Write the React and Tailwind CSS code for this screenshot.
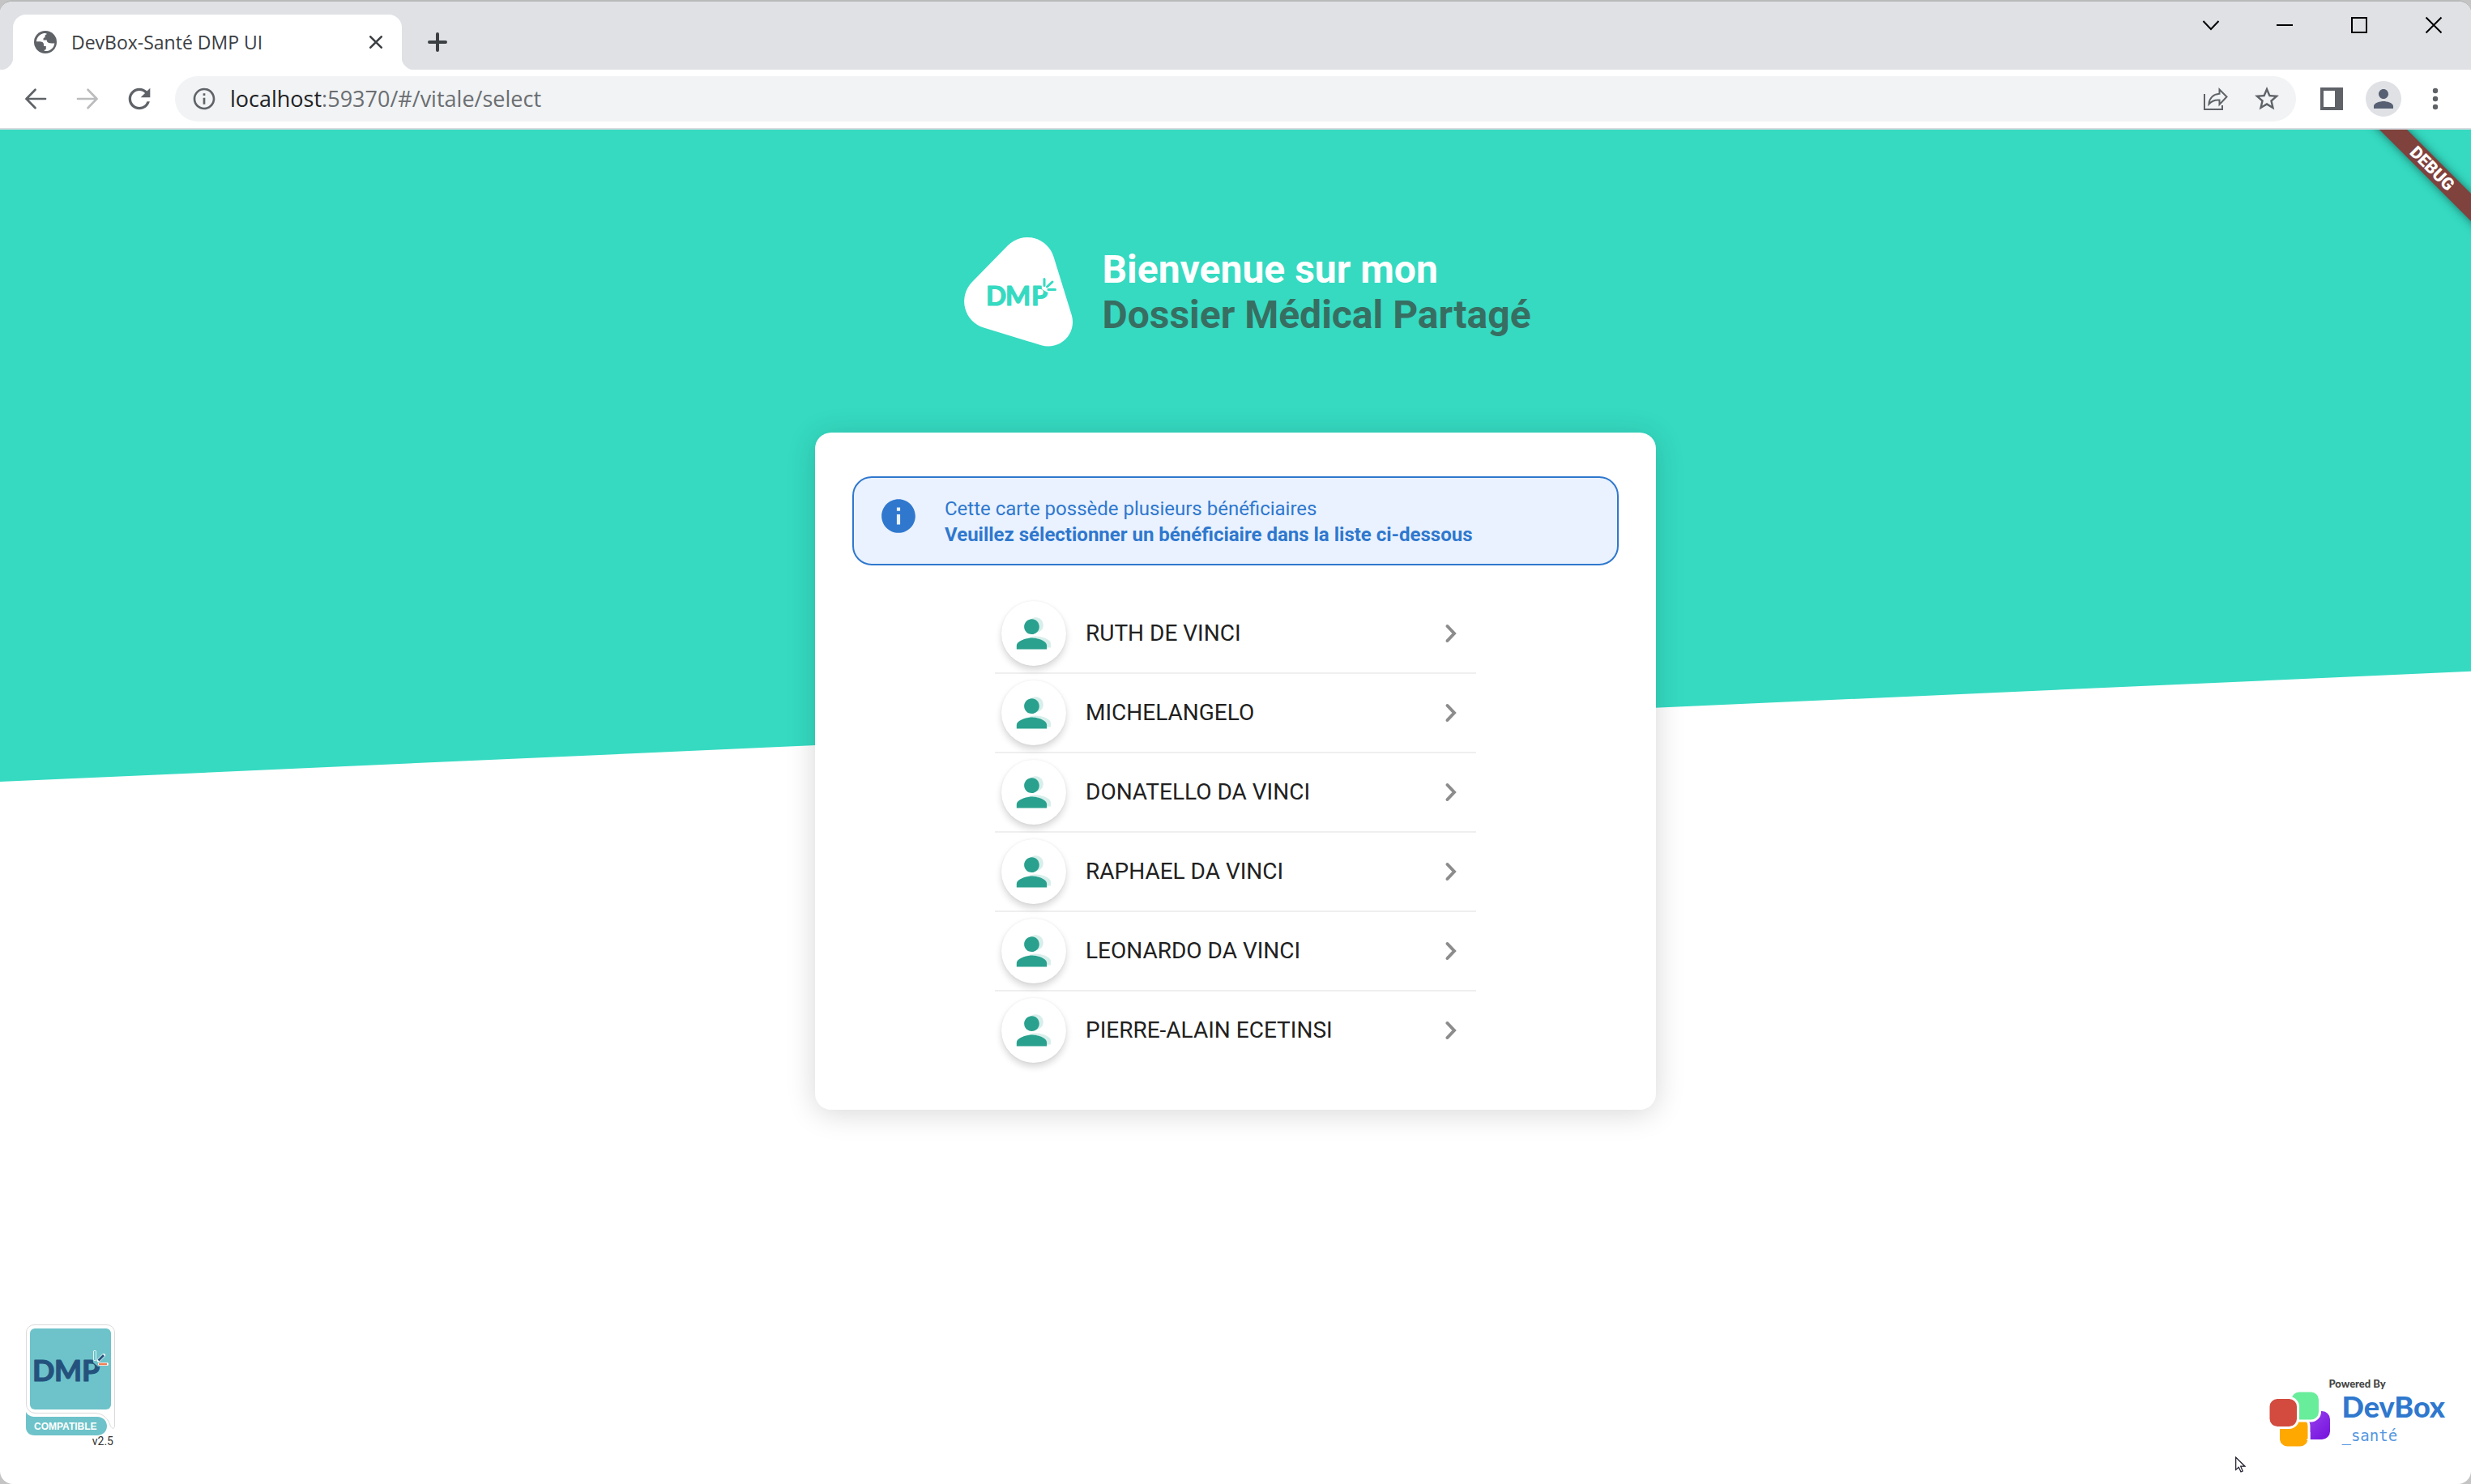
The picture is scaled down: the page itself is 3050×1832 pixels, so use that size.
import React from "react";
import { MdPerson, MdRefresh, MdStarBorder, MdInfo, MdInfoOutline } from "react-icons/md";

const beneficiaries = [
  "RUTH DE VINCI",
  "MICHELANGELO",
  "DONATELLO DA VINCI",
  "RAPHAEL DA VINCI",
  "LEONARDO DA VINCI",
  "PIERRE-ALAIN ECETINSI",
];

const PERSON = "M12 12c2.21 0 4-1.79 4-4s-1.79-4-4-4-4 1.79-4 4 1.79 4 4 4zm0 2c-2.67 0-8 1.34-8 4v2h16v-2c0-2.66-5.33-4-8-4z";

function Globe() {
  return (
    <svg className="size-7 shrink-0" viewBox="0 0 28 28" aria-hidden="true">
      <circle cx="14" cy="14" r="14" fill="#5f6368" />
      <path
        d="M12.5 2.9C7.200 3.600 3.200 8.100 2.900 13.300H6.500C9.500 13.300 12 14.300 12 17v2H14.800v3c0 1-.8 1.700-2 1.700V25c6.400.8 12-3.600 12.500-9.800-1 .5-2 .5-3.200.2L19.500 15.200C16.700 15 15.800 13.500 15.800 11.500H11.500V10.200C11.500 9 12.200 8.500 13.500 8.300V6.500c0-1.500 1-2 2.500-2.600C15 3 13.500 2.800 12.500 2.900Z"
        fill="white"
      />
    </svg>
  );
}

function TabStrip() {
  return (
    <div className="flex h-[84px] items-end justify-between bg-[#dfe1e5]">
      <div className="flex items-end">
        <div className="size-4 bg-[radial-gradient(circle_at_0_0,#dfe1e5_16px,white_17px)]" />
        <div className="flex h-[68px] w-[480px] items-center rounded-t-2xl bg-white pr-4 pl-[26px]">
          <Globe />
          <span className="ml-[18px] flex-1 font-['Open_Sans',sans-serif] text-[23px] leading-8 text-[#3c4043]">DevBox-Santé DMP UI</span>
          <button aria-label="Fermer l'onglet" className="flex size-8 items-center justify-center">
            <svg className="size-4" viewBox="0 0 16 16" fill="none" stroke="#3c4043" strokeWidth="2.6" strokeLinecap="round">
              <path d="M1.300 1.300 14.700 14.700M14.700 1.300 1.300 14.700" />
            </svg>
          </button>
        </div>
        <div className="size-4 bg-[radial-gradient(circle_at_100%_0,#dfe1e5_16px,white_17px)]" />
        <button aria-label="Nouvel onglet" className="flex h-[68px] w-14 items-center justify-center">
          <svg className="size-6" viewBox="0 0 24 24" fill="none" stroke="#3c4043" strokeWidth="4" strokeLinecap="round">
            <path d="M12 2v20M2 12h20" />
          </svg>
        </button>
      </div>
      <div className="flex self-start">
        {[
          ["Rechercher dans les onglets", "M1.500 5 11 15 20.500 5"],
          ["Réduire", "M0 10H20"],
          ["Agrandir", "M1 1H19V19H1Z"],
          ["Fermer", "M.5.5 19.500 19.500M19.500.5.5 19.500"],
        ].map(([label, d]) => (
          <button key={label} aria-label={label} className="flex h-[58px] w-[92px] items-center justify-center">
            <svg className="size-5 overflow-visible" viewBox="0 0 20 20" fill="none" stroke="black" strokeWidth="2">
              <path d={d} />
            </svg>
          </button>
        ))}
      </div>
    </div>
  );
}

function ToolButton({ label, children }) {
  return (
    <button aria-label={label} className="flex h-14 w-16 shrink-0 items-center justify-center text-[#5f6368]">
      {children}
    </button>
  );
}

function Arrow({ color, flip }) {
  return (
    <svg className={flip ? "size-7 rotate-180" : "size-7"} viewBox="0 0 28 28" fill="none" stroke={color} strokeWidth="2.700" strokeLinecap="round">
      <path d="M26 14H2.500M13.500 2.800 2.500 14 13.500 25.200" />
    </svg>
  );
}

function Toolbar() {
  return (
    <div className="flex items-center border-b-2 border-[#dadce0] bg-white px-3 py-2">
      <ToolButton label="Précédent"><Arrow color="#5f6368" /></ToolButton>
      <ToolButton label="Suivant"><Arrow color="#babcbe" flip /></ToolButton>
      <ToolButton label="Actualiser"><MdRefresh size={40} /></ToolButton>
      <div className="mx-3 flex h-14 flex-1 items-center rounded-full bg-[#f1f3f4] pr-1 pl-5">
        <MdInfoOutline size={32} color="#5f6368" />
        <a href="#/vitale/select" className="ml-4 flex-1 font-['Open_Sans',sans-serif] text-[27px] leading-9 text-[#6b6e72]">
          <span className="text-[#202124]">localhost</span>:59370/#/vitale/select
        </a>
        <ToolButton label="Partager">
          <svg className="size-8" viewBox="0 0 32 32" fill="none" stroke="#5f6368" strokeWidth="2">
            <path d="M3 10V29H25V24" />
            <path d="M21.500 4.500 30.500 13.500 21.500 23V17.500C15.500 17 11.500 19 8.500 22.500 9 15.500 13.500 10.500 21.500 9.800Z" />
          </svg>
        </ToolButton>
        <ToolButton label="Ajouter aux favoris"><MdStarBorder size={36} /></ToolButton>
      </div>
      <ToolButton label="Panneau latéral">
        <svg className="size-7" viewBox="0 0 28 28"><path fillRule="evenodd" d="M0 0H28V28H0ZM4 4V24H18V4Z" fill="#5f6368" /></svg>
      </ToolButton>
      <ToolButton label="Profil">
        <span className="flex size-11 items-center justify-center rounded-full bg-[#dfe1e5] text-[#576073]"><MdPerson size={36} /></span>
      </ToolButton>
      <ToolButton label="Menu">
        <svg className="size-7" viewBox="0 0 28 28" fill="#5f6368"><circle cx="14" cy="4" r="3.200" /><circle cx="14" cy="14" r="3.200" /><circle cx="14" cy="24" r="3.200" /></svg>
      </ToolButton>
    </div>
  );
}

function DmpLogo() {
  return (
    <svg className="h-40 w-[180px] shrink-0" viewBox="-20 0 180 160" role="img" aria-label="DMP">
      <path d="M20 68 64 23A34 34 0 0 1 120.600 37.300L142.800 109A30 30 0 0 1 105.300 146.200L34.200 124.500A34 34 0 0 1 20 68Z" fill="white" />
      <text x="37 61 93" y="97" fill="#35dac1" stroke="#35dac1" strokeWidth="1.200" strokeLinejoin="round" className="font-['Lato',sans-serif] text-[33px] font-bold">DMP</text>
      <path d="M105.500 68H120V78.500L113 81 106 77Z" fill="white" />
      <path d="M109 64.500V72.500M112.500 74 119 68M114 77.500H122.500" stroke="#35dac1" strokeWidth="3" strokeLinecap="round" fill="none" />
    </svg>
  );
}

function Avatar() {
  return (
    <span className="flex size-20 shrink-0 items-center justify-center rounded-full bg-white shadow-[0_5px_8px_rgba(0,0,0,0.16),0_0_3px_rgba(0,0,0,0.06)]">
      <svg className="size-[60px]" viewBox="0 0 60 60" aria-hidden="true">
        <path d={PERSON} fill="#d8eeea" transform="translate(4.500 1) scale(2.330)" />
        <path d={PERSON} fill="#29a18e" transform="translate(-.5 3) scale(2.330)" />
      </svg>
    </span>
  );
}

function CompatibleBadge() {
  return (
    <div className="absolute bottom-[45px] left-[30px] flex w-28 flex-col">
      <svg className="h-[140px] w-28" viewBox="0 0 112 140" role="img" aria-label="DMP compatible">
        <path d="M11 .5H102A9.500 9.500 0 0 1 111.500 10V125C111.500 129.500 108 129 106.500 125.500C103 116 98 110.500 88 109.500H14A11 11 0 0 1 2.500 98V10A9.500 9.500 0 0 1 12 .5Z" fill="white" stroke="#d9dada" />
        <path d="M2 108C4 112 8 114 14 114H90C97 114 102 119 102 125.500 102 132 97 137 90 137H13C6 137 2 133 2 127Z" fill="#6dc3c9" />
        <rect x="7" y="5" width="100" height="100" rx="6" fill="#6dc3c9" />
        <text x="10 37 71" y="69.500" fill="#24527d" stroke="#24527d" strokeWidth="1.200" strokeLinejoin="round" className="font-['Lato',sans-serif] text-[36px] font-bold">DMP</text>
        <path d="M84.500 40H100V51L91 52 85 47Z" fill="#6dc3c9" />
        <path d="M87 34V43M91.500 44.500 98 38M93 49H102" stroke="white" strokeWidth="4" strokeLinecap="round" fill="none" />
        <path d="M87 34V43" stroke="#6dc3c9" strokeWidth="2.400" strokeLinecap="round" />
        <path d="M91.500 44.500 98 38" stroke="#24527d" strokeWidth="2.800" />
        <path d="M92 49H102" stroke="#f07f55" strokeWidth="2.600" />
        <text x="12" y="130" fill="white" className="font-['Liberation_Sans',sans-serif] text-[12px] font-bold">COMPATIBLE</text>
      </svg>
      <span className="-mt-1 mr-0.5 self-end text-[14px] leading-4 text-[#333]">v2.5</span>
    </div>
  );
}

function DevBoxBadge() {
  return (
    <div className="absolute right-8 bottom-11 flex items-end gap-3">
      <svg className="h-[70px] w-[78px]" viewBox="0 0 78 70" aria-hidden="true">
        <defs>
          <linearGradient id="violet" x1="0" y1="0" x2="1" y2="1">
            <stop offset="0" stopColor="#9d4af0" />
            <stop offset="1" stopColor="#7410dc" />
          </linearGradient>
        </defs>
        <rect x="41" y="24" width="35" height="35" rx="10" fill="url(#violet)" />
        <rect x="12.500" y="31.500" width="37.500" height="37.500" rx="11" fill="#ffa800" stroke="white" strokeWidth="3" />
        <path d="M48 50H51.500V60H47Z" fill="white" />
        <path d="M40 50H48.500V58L44 62Z" fill="#ffa800" />
        <rect x="27" y="-1" width="36.500" height="37" rx="11" fill="#68ed9b" stroke="white" strokeWidth="3" />
        <rect x="0" y="7.500" width="36.500" height="37" rx="11" fill="#d24b3e" stroke="white" strokeWidth="3" />
      </svg>
      <div className="flex flex-col font-['Lato',sans-serif]">
        <span className="-ml-4 text-[13px] leading-4 font-black text-[#444]">Powered By</span>
        <span className="text-[36px] leading-10 font-black text-[#2f78ce]">DevBox</span>
        <span className="font-['DejaVu_Sans_Mono',monospace] text-[19px] leading-8 text-[#5497e0]">_santé</span>
      </div>
    </div>
  );
}

export default function App() {
  return (
    <div className="min-h-screen bg-[#c4c4c4] font-['Roboto',sans-serif]">
      <div className="flex min-h-screen flex-col overflow-hidden rounded-2xl border-t-2 border-[#b8bab9] bg-white">
        <TabStrip />
        <Toolbar />
        <main className="relative isolate flex flex-1 flex-col items-center overflow-hidden pt-[120px]">
          <div className="absolute inset-0 -z-10 bg-[#35dac1] [clip-path:polygon(0_0,100%_0,100%_40%,0_48.15%)]" />
          <div className="absolute -top-1 -right-[152px] w-[400px] origin-center">
            <div className="mt-10 rotate-45 bg-[#7f423d] text-center text-[21px] leading-6 font-black text-white shadow-[0_0_12px_rgba(0,0,0,0.5)]">DEBUG</div>
          </div>

          <header className="flex items-center gap-5">
            <DmpLogo />
            <h1 className="pt-0.5 text-[48px] leading-14 font-bold text-white">
              Bienvenue sur mon
              <span className="block text-[#386e62]">Dossier Médical Partagé</span>
            </h1>
          </header>

          <section className="mt-[94px] flex w-[1038px] max-w-full flex-col items-center rounded-[20px] bg-white px-[46px] pt-[54px] pb-[50px] shadow-[0_4px_36px_rgba(0,0,0,0.16)]">
            <div role="status" className="flex w-full gap-8 rounded-3xl border-2 border-[#2f78ce] bg-[#eaf2ff] px-[30px] pt-[22px] pb-5 text-[#2f78ce]">
              <MdInfo size={50} className="shrink-0" />
              <p className="text-[24px] leading-8">
                Cette carte possède plusieurs bénéficiaires
                <strong className="block font-bold">Veuillez sélectionner un bénéficiaire dans la liste ci-dessous</strong>
              </p>
            </div>
            <ul className="mt-9 w-[594px] max-w-full divide-y-2 divide-[#efefef]">
              {beneficiaries.map((name) => (
                <li key={name}>
                  <button className="flex h-24 w-full items-center px-2 text-left">
                    <Avatar />
                    <span className="ml-6 flex-1 text-[28px] leading-8 text-[#212121]">{name}</span>
                    <svg className="mr-[15px] h-6 w-4" viewBox="0 0 16 24" fill="none" stroke="#8c8c8c" strokeWidth="4" strokeLinecap="round" aria-hidden="true">
                      <path d="M3.500 3 12 12 3.500 21" />
                    </svg>
                  </button>
                </li>
              ))}
            </ul>
          </section>

          <CompatibleBadge />
          <DevBoxBadge />
          <svg className="absolute right-[278px] bottom-[14px] h-5 w-[13px]" viewBox="0 0 13 20" aria-hidden="true">
            <path d="M.7 1V16.500L4.300 13.200 7 19 9.200 18 6.700 12.200H12Z" fill="white" stroke="#1a1a2a" strokeWidth="1.200" />
          </svg>
        </main>
      </div>
    </div>
  );
}
